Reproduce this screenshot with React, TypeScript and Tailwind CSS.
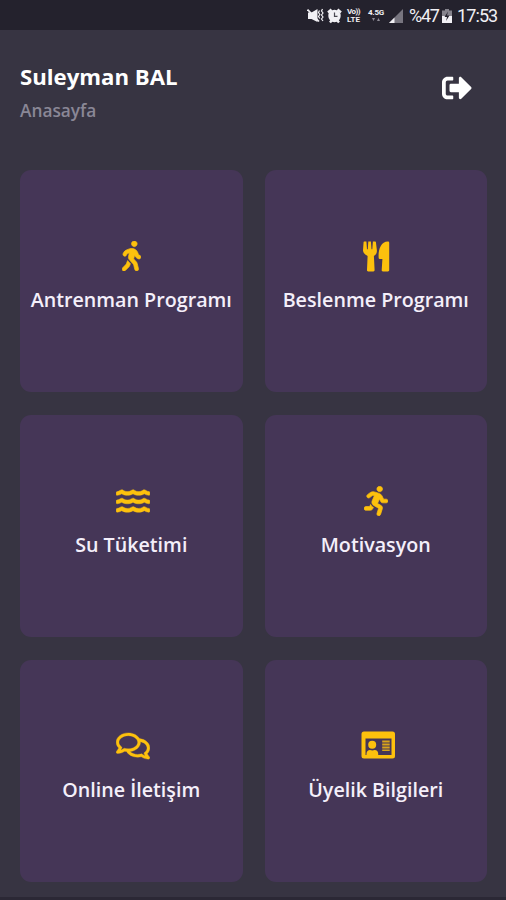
import React from "react";
import {
  FaRegComments,
  FaRunning,
  FaSignOutAlt,
  FaWalking,
  FaWater,
} from "react-icons/fa";

type MenuItem = {
  title: string;
  icon: React.ReactNode;
};

const CutleryIcon = () => (
  <svg
    viewBox="0 0 27 31"
    className="ml-0.5 h-[31px] w-[27px]"
    fill="currentColor"
  >
    <path d="M1.2.5h2.200l.6 7.700h.8L5.300.5h2.600l.6 7.700h.8L9.900.5h2.300c.4 0 .6.2.7.6l1 8.400c.2 2.500-1 4.400-3 5.400l.7 14.200c0 .8-.4 1.400-1.200 1.400H5.200c-.8 0-1.300-.6-1.200-1.400l.6-14.200C2.500 13.900 0 12 0 9.500L.6 1.100c.1-.4.3-.6.6-.6z" />
    <path d="M24.800.5c.9 0 1.400.5 1.400 1.300v27.300c0 .8-.5 1.400-1.300 1.400h-5c-.8 0-1.300-.6-1.200-1.400l.7-11.100h-2.700c-.5 0-.9-.3-1-.8C14.900 9.500 17.700.5 24.800.5z" />
  </svg>
);

const IdCardIcon = () => (
  <svg
    viewBox="0 0 35 28"
    className="mb-[3px] h-7 w-[35px] shrink-0"
    fill="currentColor"
  >
    <path
      fillRule="evenodd"
      d="M3 .5h28.500A2.500 2.500 0 0 1 34 3v22a2.500 2.500 0 0 1-2.500 2.500H3A2.500 2.500 0 0 1 .5 25V3A2.500 2.500 0 0 1 3 .5zM4.500 7.500v16.500h26V7.500z"
    />
    <circle cx="11.200" cy="13.800" r="4" />
    <path d="M5.500 25v-2.300c0-2.200 1.500-3.700 3.500-3.700 1.500.6 3.200.6 4.700 0 2 0 3.500 1.500 3.500 3.700V25z" />
    <path
      d="M21.200 9.500h7.500v2h-7.500zM21.200 12.500h7.500v2h-7.500zM21.200 15.500h7.500v2h-7.500zM21.200 18.500h7.500V20h-7.500z"
      opacity=".8"
    />
  </svg>
);

const menuItems: MenuItem[] = [
  {
    title: "Antrenman Programı",
    icon: (
      <FaWalking
        className="h-[30px] w-[19px]"
        stroke="currentColor"
        strokeWidth={12}
      />
    ),
  },
  { title: "Beslenme Programı", icon: <CutleryIcon /> },
  {
    title: "Su Tüketimi",
    icon: (
      <FaWater
        className="mb-px h-[30px] w-[34px] shrink-0"
        stroke="currentColor"
        strokeWidth={8}
      />
    ),
  },
  {
    title: "Motivasyon",
    icon: (
      <FaRunning
        className="h-[30px] w-6"
        stroke="currentColor"
        strokeWidth={12}
      />
    ),
  },
  {
    title: "Online İletişim",
    icon: (
      <FaRegComments
        className="mb-0.5 h-[30px] w-[34px] shrink-0"
        stroke="currentColor"
        strokeWidth={6}
      />
    ),
  },
  { title: "Üyelik Bilgileri", icon: <IdCardIcon /> },
];

const MutedIcon = () => (
  <svg viewBox="0 0 17 16" className="h-4 w-[17px]" fill="none">
    <path d="M1 4.500h3.500l6-3.500v13l-6-3H1z" fill="#f1f0f4" />
    <path d="M.5 1.500l11.500 12" stroke="#f1f0f4" strokeWidth="1.8" />
    <path
      d="M12.500 2.500l-1 2 1.300 2-1.300 2 1.300 2M15.500 1l-1 2 1.500 2-1.500 2 1.500 2-1.500 2 1.500 2"
      stroke="#f1f0f4"
      strokeWidth="1.2"
    />
  </svg>
);

const AlarmIcon = () => (
  <svg viewBox="0 0 15 16" className="h-4 w-[15px]" fill="none">
    <path
      d="M1 4.500l3.500-3M14 4.500l-3.500-3M3 14.500l2-2.500M12 14.500L10 12"
      stroke="#f1f0f4"
      strokeWidth="2.5"
    />
    <circle cx="7.500" cy="8" r="6.200" fill="#f1f0f4" />
    <path d="M7.500 4.500V8.300h3" stroke="#4a4852" strokeWidth="1.2" />
  </svg>
);

const SignalIcon = () => (
  <svg viewBox="0 0 16 16" className="h-4 w-4">
    <path d="M15 1v14H1z" fill="#77757f" />
    <path d="M6.500 9.500V15H1z" fill="#f1f0f4" />
  </svg>
);

const BatteryIcon = () => (
  <svg viewBox="0 0 10 16" className="h-4 w-2.5">
    <path d="M3 1h4v1.500h3V8H0V2.500h3z" fill="#85838c" />
    <path d="M0 8h10v7H0z" fill="#f1f0f4" />
    <path d="M6 3.500L2.500 9H5l-1 4 3.500-5.500H5z" fill="#23212c" />
  </svg>
);

const StatusBar = () => (
  <div className="flex h-[30px] shrink-0 items-center justify-end bg-[#24222d] pt-0.5 pr-[9px] font-[Roboto,sans-serif] text-[#f1f0f4]">
    <MutedIcon />
    <span className="ml-[3px]">
      <AlarmIcon />
    </span>
    <span className="ml-1 w-[15px] text-center text-[8px] leading-[8px] font-bold">
      <span className="block tracking-[-0.5px]">Vo))</span>
      <span className="block">LTE</span>
    </span>
    <span className="ml-1.5 flex h-4 w-[18px] flex-col items-center text-[8px] leading-[9px] font-bold">
      <span className="tracking-[-0.2px]">4.5G</span>
      <svg viewBox="0 0 8 5" className="h-[5px] w-2" fill="#8d8b95">
        <path d="M0 1h3L1.500 4zM5 4h3L6.500 1z" />
      </svg>
    </span>
    <span className="ml-[3px]">
      <SignalIcon />
    </span>
    <span className="ml-[5px] w-[30px] text-[18px] leading-5 tracking-[-1.3px] whitespace-nowrap">
      %47
    </span>
    <span className="ml-[3px]">
      <BatteryIcon />
    </span>
    <span className="ml-[5px] w-10 text-[18px] leading-5 tracking-[-0.9px] whitespace-nowrap">
      17:53
    </span>
  </div>
);

const Header = () => (
  <header className="flex h-[140px] shrink-0 items-start justify-between pt-[31px] pr-[34px] pl-5">
    <div>
      <h1 className="text-[22.2px] leading-8 font-bold text-white">
        Suleyman BAL
      </h1>
      <p className="mt-1 text-[17.3px] leading-7 font-semibold text-[#8a8796]">
        Anasayfa
      </p>
    </div>
    <button aria-label="Çıkış" className="mt-3 text-white">
      <FaSignOutAlt className="size-[30px]" />
    </button>
  </header>
);

// Wide glyphs spill over the right edge of the 30px icon box.
const MenuCard = ({ title, icon }: MenuItem) => (
  <button className="flex h-[222px] flex-col items-center rounded-[11px] bg-[#453657] pt-[71px]">
    <span className="grid size-[30px] place-content-center-safe items-center text-[#fdc10d]">
      {icon}
    </span>
    <span className="mt-[15px] text-[19.7px] leading-7 font-semibold whitespace-nowrap text-[#f4effa]">
      {title}
    </span>
  </button>
);

const App = () => (
  <div className="flex h-[900px] w-full flex-col overflow-hidden bg-[#373442] font-['Open_Sans',sans-serif]">
    <StatusBar />
    <Header />
    <main className="grid grid-cols-2 gap-x-[22px] gap-y-[23px] pr-[19px] pl-5">
      {menuItems.map((item) => (
        <MenuCard key={item.title} {...item} />
      ))}
    </main>
    <div className="mt-auto h-[3px] bg-[#2b2835]" />
  </div>
);

export default App;
